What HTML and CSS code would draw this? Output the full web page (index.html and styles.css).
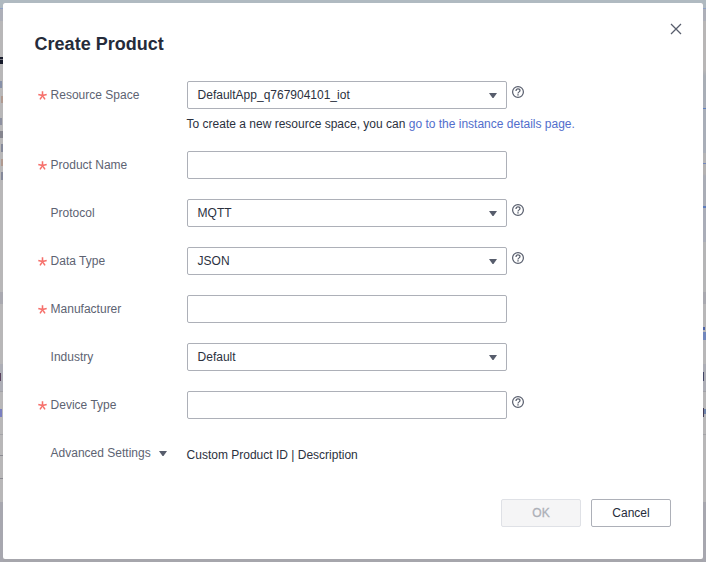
FILE: index.html
```html
<!DOCTYPE html>
<html lang="en">
<head>
<meta charset="utf-8">
<title>Create Product</title>
<link rel="stylesheet" href="styles.css">
</head>
<body>
<svg width="0" height="0" class="defs" aria-hidden="true">
  <symbol id="help" viewBox="0 0 12 12">
    <circle cx="6" cy="6" r="5.4" fill="none" stroke="currentColor" stroke-width="1.2"/>
    <path d="M4 4.9C4 3.6 4.8 2.9 6 2.9s2 .7 2 1.8C8 5.9 6 5.9 6 7.5" fill="none" stroke="currentColor" stroke-width="1.2"/>
    <path d="M5.3 8.2h1.4v1.4H5.3z" fill="currentColor"/>
  </symbol>
  <symbol id="star" viewBox="0 0 9 9">
    <path d="M4.5 4.6V.3M4.5 4.6L.3 3.5M4.5 4.6l4.2-1.1M4.5 4.6L2 8.4M4.5 4.6L7 8.4" fill="none" stroke="currentColor" stroke-width="1.55"/>
  </symbol>
  <symbol id="caret" viewBox="0 0 8 5">
    <path d="M0 0h8L4.5 5h-1z" fill="currentColor"/>
  </symbol>
</svg>
<div class="backdrop backdrop-left"></div>
<main class="dialog">
  <header class="head">
    <h1>Create Product</h1>
    <svg class="close" viewBox="0 0 12 12"><path d="M1 1l10 10M11 1L1 11"/></svg>
  </header>
  <form class="form">
    <div class="row">
      <label><svg class="star"><use href="#star"/></svg>Resource Space</label>
      <div class="field">
        <div class="control"><div class="box">DefaultApp_q767904101_iot<svg class="caret"><use href="#caret"/></svg></div><svg class="help"><use href="#help"/></svg></div>
        <p class="hint">To create a new resource space, you can <a>go to the instance details page.</a></p>
      </div>
    </div>
    <div class="row">
      <label><svg class="star"><use href="#star"/></svg>Product Name</label>
      <div class="control"><div class="box"></div></div>
    </div>
    <div class="row">
      <label>Protocol</label>
      <div class="control"><div class="box">MQTT<svg class="caret"><use href="#caret"/></svg></div><svg class="help"><use href="#help"/></svg></div>
    </div>
    <div class="row">
      <label><svg class="star"><use href="#star"/></svg>Data Type</label>
      <div class="control"><div class="box">JSON<svg class="caret"><use href="#caret"/></svg></div><svg class="help"><use href="#help"/></svg></div>
    </div>
    <div class="row">
      <label><svg class="star"><use href="#star"/></svg>Manufacturer</label>
      <div class="control"><div class="box"></div></div>
    </div>
    <div class="row">
      <label>Industry</label>
      <div class="control"><div class="box">Default<svg class="caret"><use href="#caret"/></svg></div></div>
    </div>
    <div class="row">
      <label><svg class="star"><use href="#star"/></svg>Device Type</label>
      <div class="control"><div class="box"></div><svg class="help"><use href="#help"/></svg></div>
    </div>
    <div class="row">
      <label>Advanced Settings<svg class="caret toggle"><use href="#caret"/></svg></label>
      <div class="summary">Custom Product ID | Description</div>
    </div>
  </form>
  <footer class="foot">
    <button type="button" class="btn" disabled>OK</button>
    <button type="button" class="btn">Cancel</button>
  </footer>
</main>
<div class="backdrop backdrop-right"></div>
</body>
</html>
```
FILE: styles.css
```css
* { box-sizing: border-box; }
body {
  margin: 0;
  height: 562px;
  display: grid;
  grid-template-columns: 3px 700px 3px;
  overflow: hidden;
  background: linear-gradient(#b0bac1 0 3px, #a6a6ac 3px);
  font: 12px/18px "Liberation Sans", Arial, sans-serif;
  color: #2b3140;
}
.defs { position: absolute; }
.backdrop-left {
  background:
    linear-gradient(#8b8b92, #8b8b92) 0 455px / 3px 1px no-repeat,
    linear-gradient(#8b8b92, #8b8b92) 0 478px / 3px 1px no-repeat,
    linear-gradient(#8790a8, #8790a8) 0 81px / 2px 7px no-repeat,
    linear-gradient(#b09a90, #b09a90) 1px 96px / 2px 7px no-repeat,
    linear-gradient(#8d90a0, #8d90a0) 0 118px / 2px 7px no-repeat,
    linear-gradient(#85858e, #85858e) 0 131px / 3px 7px no-repeat,
    linear-gradient(#85899a, #85899a) 1px 144px / 2px 8px no-repeat,
    linear-gradient(#b09a90, #b09a90) 1px 159px / 2px 7px no-repeat,
    linear-gradient(#85899a, #85899a) 1px 172px / 2px 8px no-repeat,
    linear-gradient(#161a2a 0 2px, #7c7c84 2px 3px, #161a2a 3px) 0 57px / 3px 7px no-repeat,
    linear-gradient(#58415c, #58415c) 0 373px / 1px 8px no-repeat,
    linear-gradient(#7a7fc0, #7a7fc0) 0 409px / 2px 8px no-repeat,
    linear-gradient(#afb9c0 0 8px, #8fa0c6 8px 9px, #adafb8 9px 21px, #b8b7b8 21px 292px, #a9a9b0 292px 304px, #b8b7b8 304px 364px, #adaeb6 364px 391px, #a2a2a7 391px 392px, #b8b7b8 392px 434px, #a4a4a8 434px 435px, #b8b7b8 435px 502px, #a7a7af 502px);
}
.backdrop-right {
  background:
    linear-gradient(#4c62a8, #4c62a8) 0 327px / 2px 3px no-repeat,
    linear-gradient(#7287bd, #7287bd) 0 332px / 3px 8px no-repeat,
    linear-gradient(#424565, #424565) 0 372px / 1px 9px no-repeat,
    linear-gradient(#433d58, #433d58) 0 408px / 1px 9px no-repeat,
    linear-gradient(#6f83aa, #6f83aa) 1px 409px / 2px 5px no-repeat,
    linear-gradient(#afb9c0 0 8px, #8fa0c6 8px 9px, #adafb8 9px 21px, #b8b6b6 21px 70px, #a9aeb5 76px, #a9aeb8 108px, #5f7fc0 108px 109px, #a9aeb8 109px 153px, #b5b4b5 153px 163px, #7388bd 163px 164px, #b4b2b2 164px 174px, #aaadb6 176px 206px, #5e7dbe 206px 208px, #aaadb8 208px 242px, #b5b5b6 242px 292px, #a9a9b0 292px 304px, #b8b7b8 304px 364px, #adaeb6 364px 391px, #a2a2a7 391px 392px, #b8b7b8 392px 434px, #a4a4a8 434px 435px, #b8b7b8 435px 502px, #a7a7af 502px);
}
.dialog {
  display: flex;
  flex-direction: column;
  height: 556px;
  margin-top: 3px;
  padding: 20px 32px 32px;
  background: #fff;
  border-radius: 2px;
}
.head { display: flex; justify-content: space-between; }
h1 { margin: 9px 0 0; font-size: 18px; line-height: 24px; font-weight: 700; color: #252b3a; text-indent: -0.4px; }
.close { width: 12px; height: 12px; margin-right: -11px; fill: none; stroke: #575d6c; stroke-width: 1.25; }
.form { display: flex; flex-direction: column; gap: 20px; margin-top: 25px; }
.row { display: grid; grid-template-columns: 136.4px 1fr; padding-left: 15.6px; }
label {
  position: relative;
  height: 28px;
  line-height: 28px;
  display: flex;
  align-items: center;
  color: #5d6372;
}
.star { position: absolute; left: -12.6px; top: 10px; width: 9px; height: 9px; color: #f66f6a; }
.control { display: flex; }
.box {
  width: 320px;
  height: 28px;
  padding: 0 9px 0 9.6px;
  border: 1px solid #adb0b8;
  border-radius: 2px;
  display: flex;
  align-items: center;
  justify-content: space-between;
}
.caret { width: 8px; height: 5px; margin-top: 1px; color: #575d6c; }
.toggle { margin: 1px 0 0 8.6px; }
.help { width: 12px; height: 12px; margin: 5px 0 0 5px; color: #575d6c; }
.hint { margin: 6px 0 0; line-height: 18px; height: 16px; text-indent: -0.4px; }
.hint a { color: #526ecc; }
.summary { line-height: 32px; height: 28px; text-indent: -0.4px; }
.foot { display: flex; justify-content: flex-end; gap: 10px; margin-top: auto; }
.btn {
  width: 80px;
  height: 28px;
  padding: 0;
  border: 1px solid #adb0b8;
  border-radius: 2px;
  background: #fff;
  font: inherit;
  color: #252b3a;
}
.btn:disabled { background: #f5f5f6; border-color: #dfe1e6; color: #adb0b8; -webkit-text-stroke: 0.3px #adb0b8; }
```
